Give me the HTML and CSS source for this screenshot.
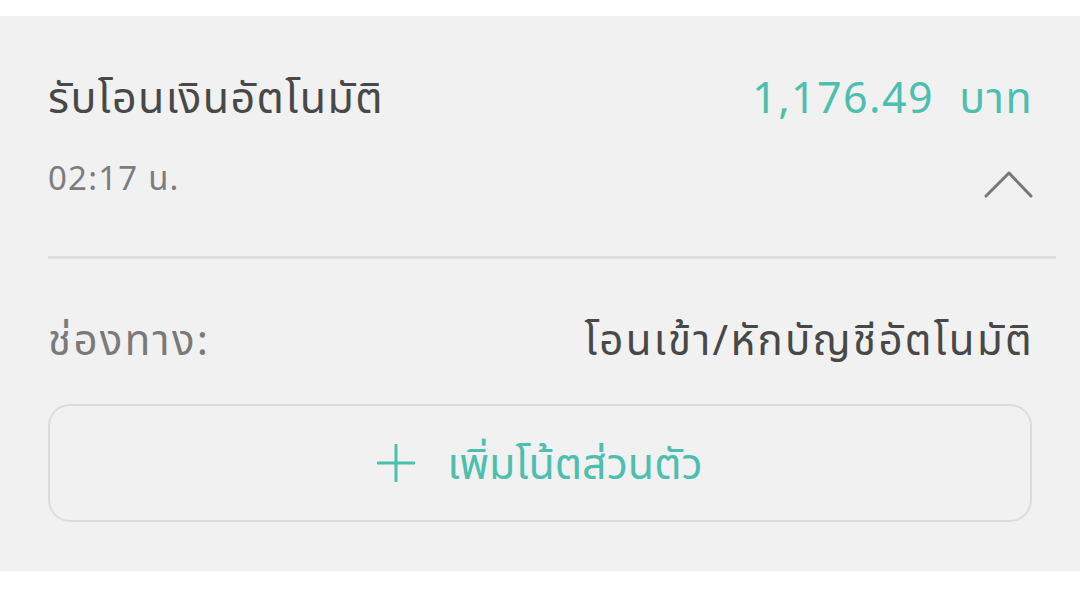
FILE: index.html
```html
<!DOCTYPE html>
<html lang="th">
<head>
<meta charset="utf-8">
<link rel="stylesheet" href="styles.css">
</head>
<body>
<div class="panel">
  <div class="row head">
    <div class="title">รับโอนเงินอัตโนมัติ</div>
    <div class="amount">1,176.49&nbsp; บาท</div>
  </div>
  <div class="row sub">
    <div class="time">02:17 น.</div>
    <svg class="chevron" width="49" height="30" viewBox="0 0 49 30"><path d="M2 26 L25 3 L47 26" fill="none" stroke="#777777" stroke-width="3" stroke-linecap="round" stroke-linejoin="round"/></svg>
  </div>
  <div class="divider"></div>
  <div class="row detail">
    <div class="label">ช่องทาง:</div>
    <div class="value">โอนเข้า/หักบัญชีอัตโนมัติ</div>
  </div>
  <div class="note-btn">
    <svg class="plus" width="38" height="38" viewBox="0 0 38 38"><path d="M19 1 V37 M1 19 H37" stroke="#4dbfae" stroke-width="3" stroke-linecap="round"/></svg>
    <span class="note-text">เพิ่มโน้ตส่วนตัว</span>
  </div>
</div>
</body>
</html>
```
FILE: styles.css
```css
html, body {
  margin: 0;
  padding: 0;
  background: #ffffff;
}
body {
  font-family: "Noto Sans", "Noto Sans Thai", "Noto Sans Thai UI", sans-serif;
  font-weight: 430;
}
.panel {
  margin-top: 16px;
  height: 555px;
  box-sizing: border-box;
  background: #f1f1f1;
  padding: 53px 24px 0 48px;
}
.row {
  display: flex;
  justify-content: space-between;
  align-items: flex-start;
  padding-right: 24px;
}
.title {
  font-size: 43px;
  line-height: 56px;
  letter-spacing: 1.4px;
  color: #484848;
}
.amount {
  font-size: 43px;
  line-height: 56px;
  letter-spacing: 1.4px;
  margin-right: -1px;
  color: #4dbfae;
}
.sub {
  margin-top: 31px;
}
.time {
  font-size: 33px;
  line-height: 44px;
  letter-spacing: 1.2px;
  color: #7d7d7d;
}
.chevron {
  display: block;
  margin-top: 14px;
  margin-right: -1px;
}
.divider {
  margin-top: 56px;
  height: 3px;
  background: #dfdfdf;
}
.detail {
  margin-top: 52px;
}
.label {
  font-size: 42px;
  line-height: 56px;
  letter-spacing: 2.3px;
  color: #7a7a7a;
}
.value {
  font-size: 42px;
  line-height: 56px;
  letter-spacing: 2.3px;
  margin-right: -2px;
  color: #484848;
}
.note-btn {
  margin-top: 37px;
  margin-right: 24px;
  height: 118px;
  box-sizing: border-box;
  border: 2px solid #dcdcdc;
  border-radius: 22px;
  display: flex;
  align-items: center;
  justify-content: center;
  gap: 32px;
}
.plus {
  display: block;
}
.note-text {
  font-size: 43px;
  line-height: 56px;
  color: #4dbfae;
}
```
